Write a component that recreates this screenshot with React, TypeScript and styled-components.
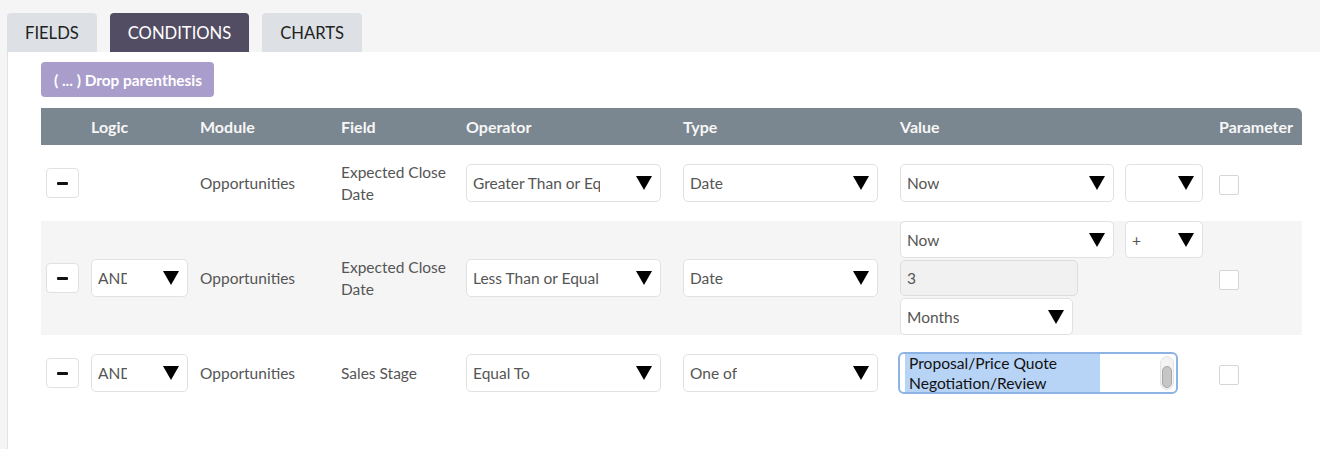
import React from 'react';
import styled, { createGlobalStyle } from 'styled-components';

const GlobalStyle = createGlobalStyle`
  body {
    margin: 0;
    background: #ffffff;
    font-family: Lato, "Open Sans", sans-serif;
  }
`;

const Page = styled.div`
  width: 1320px;
  height: 449px;
  overflow: hidden;
  background: #f5f5f5;
`;

const TabBar = styled.div`
  display: flex;
  column-gap: 13px;
  padding: 13px 0 0 7px;
`;

const Tab = styled.div<{ $active?: boolean }>`
  box-sizing: border-box;
  height: 39px;
  padding: 0 18px;
  display: flex;
  align-items: center;

  font-size: 16.6px;
  text-transform: uppercase;
  color: ${(p) => (p.$active ? '#ffffff' : '#222222')};
  background-color: ${(p) => (p.$active ? '#534d64' : '#dde1e5')};
  border-radius: 4px 4px 0 0;
`;

const Panel = styled.div`
  box-sizing: border-box;
  margin-left: 7px;
  height: 397px;
  padding: 10px 18px 0 33px;

  background: #ffffff;
  border-left: 1px solid #e2e2e2;
`;

const DropButton = styled.button`
  all: unset;
  box-sizing: border-box;
  width: 173px;
  height: 35px;
  padding-left: 13px;
  margin-bottom: 11px;

  display: flex;
  align-items: center;

  background-color: #a99dcb;
  border-radius: 4px;
  color: #ffffff;
  font-family: Lato, sans-serif;
  font-weight: 700;
  font-size: 15.4px;
  white-space: nowrap;
`;

const columns = '50px 109px 141px 125px 217px 217px 319px 83px';

const HeaderRow = styled.div`
  display: grid;
  grid-template-columns: ${columns};
  align-items: center;
  height: 37px;

  background-color: #7a8690;
  border-radius: 0 6px 0 0;
  color: #f7f7f7;
  font-weight: 700;
  font-size: 16px;
`;

const Row = styled.div<{ $height: number; $shaded?: boolean }>`
  display: grid;
  grid-template-columns: ${columns};
  align-items: center;
  height: ${(p) => p.$height}px;

  background-color: ${(p) => (p.$shaded ? '#f5f5f5' : '#ffffff')};
  color: #555555;
  font-size: 15.5px;
  line-height: 22px;
`;

const Cell = styled.div`
  padding-right: 12px;
`;

const RemoveCell = styled.div`
  padding-left: 5px;
`;

const RemoveButton = styled.button`
  all: unset;
  box-sizing: border-box;
  width: 33px;
  height: 30px;
  display: flex;
  align-items: center;
  justify-content: center;

  background: #ffffff;
  border: 1px solid #e1e1e1;
  border-radius: 4px;

  &::before {
    content: '';
    width: 11px;
    height: 3px;
    background: #111111;
    border-radius: 1px;
  }
`;

const SelectBox = styled.div<{ $width: number; $height: number }>`
  box-sizing: border-box;
  width: ${(p) => p.$width}px;
  height: ${(p) => p.$height}px;
  padding: 0 8px 0 6px;

  display: flex;
  align-items: center;
  justify-content: space-between;

  background: #ffffff;
  border: 1px solid #e1e1e1;
  border-radius: 5px;
  color: #555555;
  font-size: 15.5px;
`;

const SelectLabel = styled.span<{ $max: number }>`
  max-width: ${(p) => p.$max}px;
  overflow: hidden;
  white-space: nowrap;
`;

const Arrow = styled.svg`
  flex-shrink: 0;
  width: 16px;
  height: 14px;
`;

const TextInput = styled.div`
  box-sizing: border-box;
  width: 178px;
  height: 36px;
  padding-left: 6px;
  display: flex;
  align-items: center;

  background: #f1f1f1;
  border: 1px solid #dddddd;
  border-radius: 5px;
  color: #555555;
  font-size: 15.5px;
`;

const ValueStack = styled.div`
  display: flex;
  flex-direction: column;
  row-gap: 2px;
`;

const ValueLine = styled.div`
  display: flex;
  column-gap: 11px;
`;

const Checkbox = styled.div`
  box-sizing: border-box;
  width: 20px;
  height: 20px;
  margin-top: 3px;
  background: #ffffff;
  border: 1px solid #d6d6d6;
  border-radius: 2px;
`;

const MultiSelect = styled.div`
  box-sizing: border-box;
  width: 280px;
  height: 42px;
  margin-left: -2px;
  padding: 0 2px 0 5px;

  display: flex;
  align-items: center;
  background: #ffffff;
  border: 2px solid #8db2e4;
  border-radius: 6px;
`;

const OptionList = styled.div`
  flex: 1;
  align-self: stretch;
  overflow: hidden;
`;

const Option = styled.div`
  width: 191px;
  padding-left: 4px;
  background: #b7d3f6;
  color: #111111;
  font-size: 15.6px;
  line-height: 19.5px;
`;

const ScrollTrack = styled.div`
  box-sizing: border-box;
  width: 14px;
  height: 34px;
  padding: 9px 1px 1px;
  display: flex;
  flex-direction: column;

  background: #f3f3f3;
  border: 1px solid #e4e4e4;
  border-radius: 7px;
`;

const ScrollThumb = styled.div`
  flex: 1;
  background: #c6c6c6;
  border: 1px solid #a8a8a8;
  border-radius: 6px;
`;

function Select({ text, width, height = 38 }: { text: string; width: number; height?: number }) {
  return (
    <SelectBox $width={width} $height={height}>
      <SelectLabel $max={width - 68}>{text}</SelectLabel>
      <Arrow viewBox="0 0 16 14">
        <polygon points="0,0 16,0 8,14" fill="#000000" />
      </Arrow>
    </SelectBox>
  );
}

export default function App() {
  return (
    <Page>
      <GlobalStyle />
      <TabBar>
        <Tab>Fields</Tab>
        <Tab $active>Conditions</Tab>
        <Tab>Charts</Tab>
      </TabBar>
      <Panel>
        <DropButton>( ... ) Drop parenthesis</DropButton>

        <HeaderRow>
          <span />
          <span>Logic</span>
          <span>Module</span>
          <span>Field</span>
          <span>Operator</span>
          <span>Type</span>
          <span>Value</span>
          <span>Parameter</span>
        </HeaderRow>

        <Row $height={76}>
          <RemoveCell>
            <RemoveButton />
          </RemoveCell>
          <Cell />
          <Cell>Opportunities</Cell>
          <Cell>Expected Close Date</Cell>
          <Cell>
            <Select text="Greater Than or Equal" width={195} />
          </Cell>
          <Cell>
            <Select text="Date" width={195} />
          </Cell>
          <ValueLine>
            <Select text="Now" width={214} />
            <Select text="" width={78} />
          </ValueLine>
          <Checkbox />
        </Row>

        <Row $height={114} $shaded>
          <RemoveCell>
            <RemoveButton />
          </RemoveCell>
          <Cell>
            <Select text="AND" width={97} />
          </Cell>
          <Cell>Opportunities</Cell>
          <Cell>Expected Close Date</Cell>
          <Cell>
            <Select text="Less Than or Equal" width={195} />
          </Cell>
          <Cell>
            <Select text="Date" width={195} />
          </Cell>
          <ValueStack>
            <ValueLine>
              <Select text="Now" width={214} height={37} />
              <Select text="+" width={78} height={37} />
            </ValueLine>
            <TextInput>3</TextInput>
            <Select text="Months" width={173} height={37} />
          </ValueStack>
          <Checkbox />
        </Row>

        <Row $height={76}>
          <RemoveCell>
            <RemoveButton />
          </RemoveCell>
          <Cell>
            <Select text="AND" width={97} />
          </Cell>
          <Cell>Opportunities</Cell>
          <Cell>Sales Stage</Cell>
          <Cell>
            <Select text="Equal To" width={195} />
          </Cell>
          <Cell>
            <Select text="One of" width={195} />
          </Cell>
          <div>
            <MultiSelect>
              <OptionList>
                <Option>Proposal/Price Quote</Option>
                <Option>Negotiation/Review</Option>
              </OptionList>
              <ScrollTrack>
                <ScrollThumb />
              </ScrollTrack>
            </MultiSelect>
          </div>
          <Checkbox />
        </Row>
      </Panel>
    </Page>
  );
}
